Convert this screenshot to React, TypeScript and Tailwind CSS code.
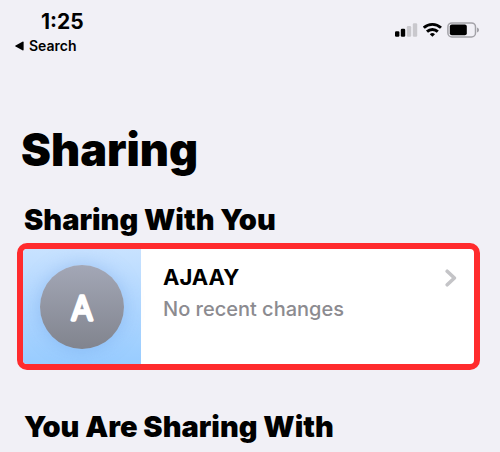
import React from 'react';

const SignalIcon: React.FC = () => (
  <svg width="24" height="16" viewBox="0 0 24 16" aria-hidden="true">
    <rect x="0" y="9.2" width="4.4" height="5.6" rx="1.2" fill="#000" />
    <rect x="5.8" y="6.8" width="4.4" height="8" rx="1.2" fill="#000" />
    <rect x="11.8" y="4" width="4.4" height="10.8" rx="1.2" fill="#c9c8cd" />
    <rect x="17.8" y="1.2" width="4.4" height="13.6" rx="1.2" fill="#c9c8cd" />
  </svg>
);

const WifiIcon: React.FC = () => (
  <svg width="20" height="16" viewBox="0 0 20 16" fill="none" stroke="#000" strokeWidth="2.9" aria-hidden="true">
    <path d="M0.8 5.8a12.6 12.6 0 0 1 17.2 0" />
    <path d="M4 9.6a7.8 7.8 0 0 1 10.8 0" />
    <path d="M9.4 14.8l-2.6-2.6a3.8 3.8 0 0 1 5.2 0z" fill="#000" stroke="none" />
  </svg>
);

const BatteryIcon: React.FC = () => (
  <svg width="33" height="16" viewBox="0 0 33 16" aria-hidden="true">
    <rect x="0.9" y="0.9" width="27.6" height="14" rx="4" fill="none" stroke="#a3a2a8" strokeWidth="1.5" />
    <rect x="2.8" y="2.6" width="17" height="10.6" rx="2" fill="#000" />
    <path d="M30 5.6c1.3.4 2 1.3 2 2.4s-.7 2-2 2.4z" fill="#a3a2a8" />
  </svg>
);

const StatusBar: React.FC = () => (
  <header className="flex justify-between pl-[15px] pr-5 pt-3">
    <div>
      <div className="pl-[26px] text-[21px] leading-5 font-bold">1:25</div>
      <a href="#search" className="mt-1 flex items-center gap-[5px] text-sm leading-5 font-semibold">
        <svg width="9" height="10" viewBox="0 0 9 10" aria-hidden="true">
          <path d="M0.6 4.4L7.4 0.7Q8.6 0.2 8.6 1.3V8.7Q8.6 9.8 7.4 9.3L0.6 5.6Q-0.3 5 0.6 4.4z" />
        </svg>
        Search
      </a>
    </div>
    <div className="flex items-center gap-1 self-start pt-2.5">
      <SignalIcon />
      <WifiIcon />
      <BatteryIcon />
    </div>
  </header>
);

const Avatar: React.FC<{ initial: string }> = ({ initial }) => (
  <div className="flex w-[118px] shrink-0 items-center justify-center bg-linear-to-b from-[#c8e2ff] to-[#98ccff]">
    <div className="size-[84px] rounded-full bg-linear-to-b from-[#a3a7b6] to-[#81848e] shadow-[0_0_20px_rgba(90,140,220,0.35)]">
      <svg className="size-full" viewBox="0 0 84 84">
        <text
          x="42"
          y="55"
          textAnchor="middle"
          className="fill-white stroke-white text-[32px] font-light"
          strokeWidth="3.4"
          strokeLinejoin="round"
        >
          {initial}
        </text>
      </svg>
    </div>
  </div>
);

export default function App() {
  const people = [{ name: 'AJAAY', initial: 'A', status: 'No recent changes' }];

  return (
    <div className="min-h-screen bg-[#f1f0f6] font-['Inter',sans-serif] text-black">
      <StatusBar />
      <main className="pt-[68px]">
        <h1 className="px-[21px] text-[45px] leading-[52px] font-black">Sharing</h1>

        <section className="pt-[26px]">
          <h2 className="px-6 text-[29px] leading-9 font-black">Sharing With You</h2>
          <ul className="mt-[5px] pr-5 pl-[17px]">
            {people.map((person) => (
              <li key={person.name}>
                <button
                  type="button"
                  className="flex h-[127px] w-full overflow-hidden rounded-[10px] border-6 border-[#ff2b2d] bg-white text-left"
                >
                  <Avatar initial={person.initial} />
                  <span className="flex-1 pt-3 pl-[22px]">
                    <span className="block text-[22px] leading-8 font-bold">{person.name}</span>
                    <span className="block text-xl leading-8 font-medium text-[#8c8b90]">{person.status}</span>
                  </span>
                  <svg className="mt-5 mr-[17px] h-[18px] w-3" viewBox="0 0 12 18" fill="none" aria-hidden="true">
                    <path d="M2.2 2.2L9.4 9l-7.2 6.8" stroke="#c4c4c7" strokeWidth="3.6" strokeLinecap="round" strokeLinejoin="round" />
                  </svg>
                </button>
              </li>
            ))}
          </ul>
        </section>

        <section className="pt-[39px]">
          <h2 className="px-6 text-[29px] leading-9 font-black">You Are Sharing With</h2>
        </section>
      </main>
    </div>
  );
}
